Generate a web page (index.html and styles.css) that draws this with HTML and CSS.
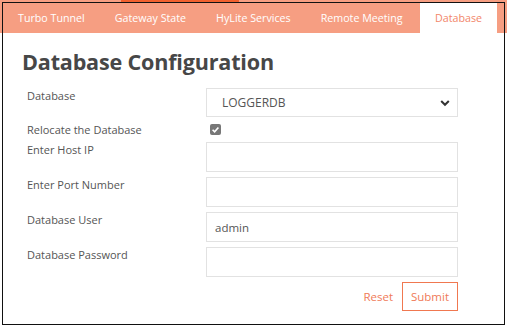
FILE: index.html
```html
<!DOCTYPE html>
<html>
<head>
<meta charset="utf-8">
<link rel="stylesheet" href="styles.css">
</head>
<body>
<div class="hover-strip"></div>
<div class="frame">
  <nav class="tabs">
    <span class="tab">Turbo Tunnel</span>
    <span class="tab">Gateway State</span>
    <span class="tab">HyLite Services</span>
    <span class="tab">Remote Meeting</span>
    <span class="tab active">Database</span>
  </nav>
  <h1 class="title">Database Configuration</h1>
  <form class="form">
    <label class="label">Database</label>
    <div class="select-wrap">
      <select class="select"><option>LOGGERDB</option></select>
      <svg class="chevron" width="10" height="8" viewBox="0 0 10 8"><path d="M1.2 2 L5 5.8 L8.8 2" fill="none" stroke="#333" stroke-width="2"/></svg>
    </div>
    <label class="label">Relocate the Database</label>
    <div class="check-row">
      <span class="check"><svg width="11" height="11" viewBox="0 0 11 11"><path d="M2.6 5.8 L4.6 7.8 L8.4 3.4" fill="none" stroke="#fff" stroke-width="1.6"/></svg></span>
    </div>
    <label class="label">Enter Host IP</label>
    <input class="input" type="text">
    <label class="label">Enter Port Number</label>
    <input class="input" type="text">
    <label class="label">Database User</label>
    <input class="input" type="text" value="admin">
    <label class="label">Database Password</label>
    <input class="input" type="password">
    <div></div>
    <div class="actions">
      <button type="button" class="btn-reset">Reset</button>
      <button type="button" class="btn-submit">Submit</button>
    </div>
  </form>
</div>
</body>
</html>
```

FILE: styles.css
```css
html, body {
  margin: 0;
  padding: 0;
}
body {
  width: 507px;
  height: 327px;
  overflow: hidden;
  background: linear-gradient(#f69e82 0, #f69e82 33px, #ffffff 33px);
  font-family: "Open Sans", "Noto Sans", sans-serif;
}
.hover-strip {
  height: 2px;
  width: 118px;
  margin-left: 121px;
  background: #f0602e;
}
.frame {
  margin: 0 2px 0 2px;
  height: 323px;
  box-sizing: border-box;
  border: 1px solid #111;
  background: #fff;
}
.tabs {
  display: flex;
  height: 30px;
  background: #f69e82;
  padding-right: 7px;
}
.tab {
  padding: 0 15px;
  font-size: 10.7px;
  line-height: 30px;
  color: #fff;
  white-space: nowrap;
}
.tab.active {
  background: #fff;
  color: #f2866a;
  margin-left: auto;
}
.title {
  margin: 14px 0 0 19px;
  font-size: 21.6px;
  line-height: 30px;
  font-weight: 700;
  color: #474747;
  letter-spacing: -0.2px;
}
.form {
  display: grid;
  grid-template-columns: 179px 252px;
  row-gap: 5px;
  margin: 11px 0 0 24px;
}
.label {
  font-size: 11px;
  line-height: 15px;
  color: #555;
  padding-top: 0;
}
.select-wrap {
  position: relative;
  height: 29px;
}
.select {
  appearance: none;
  -webkit-appearance: none;
  width: 100%;
  height: 29px;
  box-sizing: border-box;
  border: 1px solid #e2e2e2;
  background: #fff;
  padding: 0 0 0 15px;
  font-family: inherit;
  font-size: 12px;
  color: #555;
  outline: none;
}
.chevron {
  position: absolute;
  right: 8px;
  top: 11px;
}
.check-row {
  height: 15px;
  display: flex;
  align-items: center;
  padding-left: 4px;
}
.check {
  width: 11px;
  height: 11px;
  border-radius: 2px;
  background: #777;
  display: flex;
}
.input {
  height: 30px;
  box-sizing: border-box;
  border: 1px solid #e2e2e2;
  padding: 0 8px;
  font-family: inherit;
  font-size: 11.5px;
  color: #555;
  outline: none;
}
.actions {
  display: flex;
  justify-content: flex-end;
  align-items: center;
  gap: 9px;
  height: 29px;
}
.btn-reset, .btn-submit {
  font-family: inherit;
  font-size: 11.5px;
  color: #f07a58;
  background: #fff;
  cursor: pointer;
}
.btn-reset {
  border: none;
  padding: 0;
}
.btn-submit {
  height: 29px;
  width: 56px;
  border: 1px solid #f07850;
  padding: 0;
}
```
